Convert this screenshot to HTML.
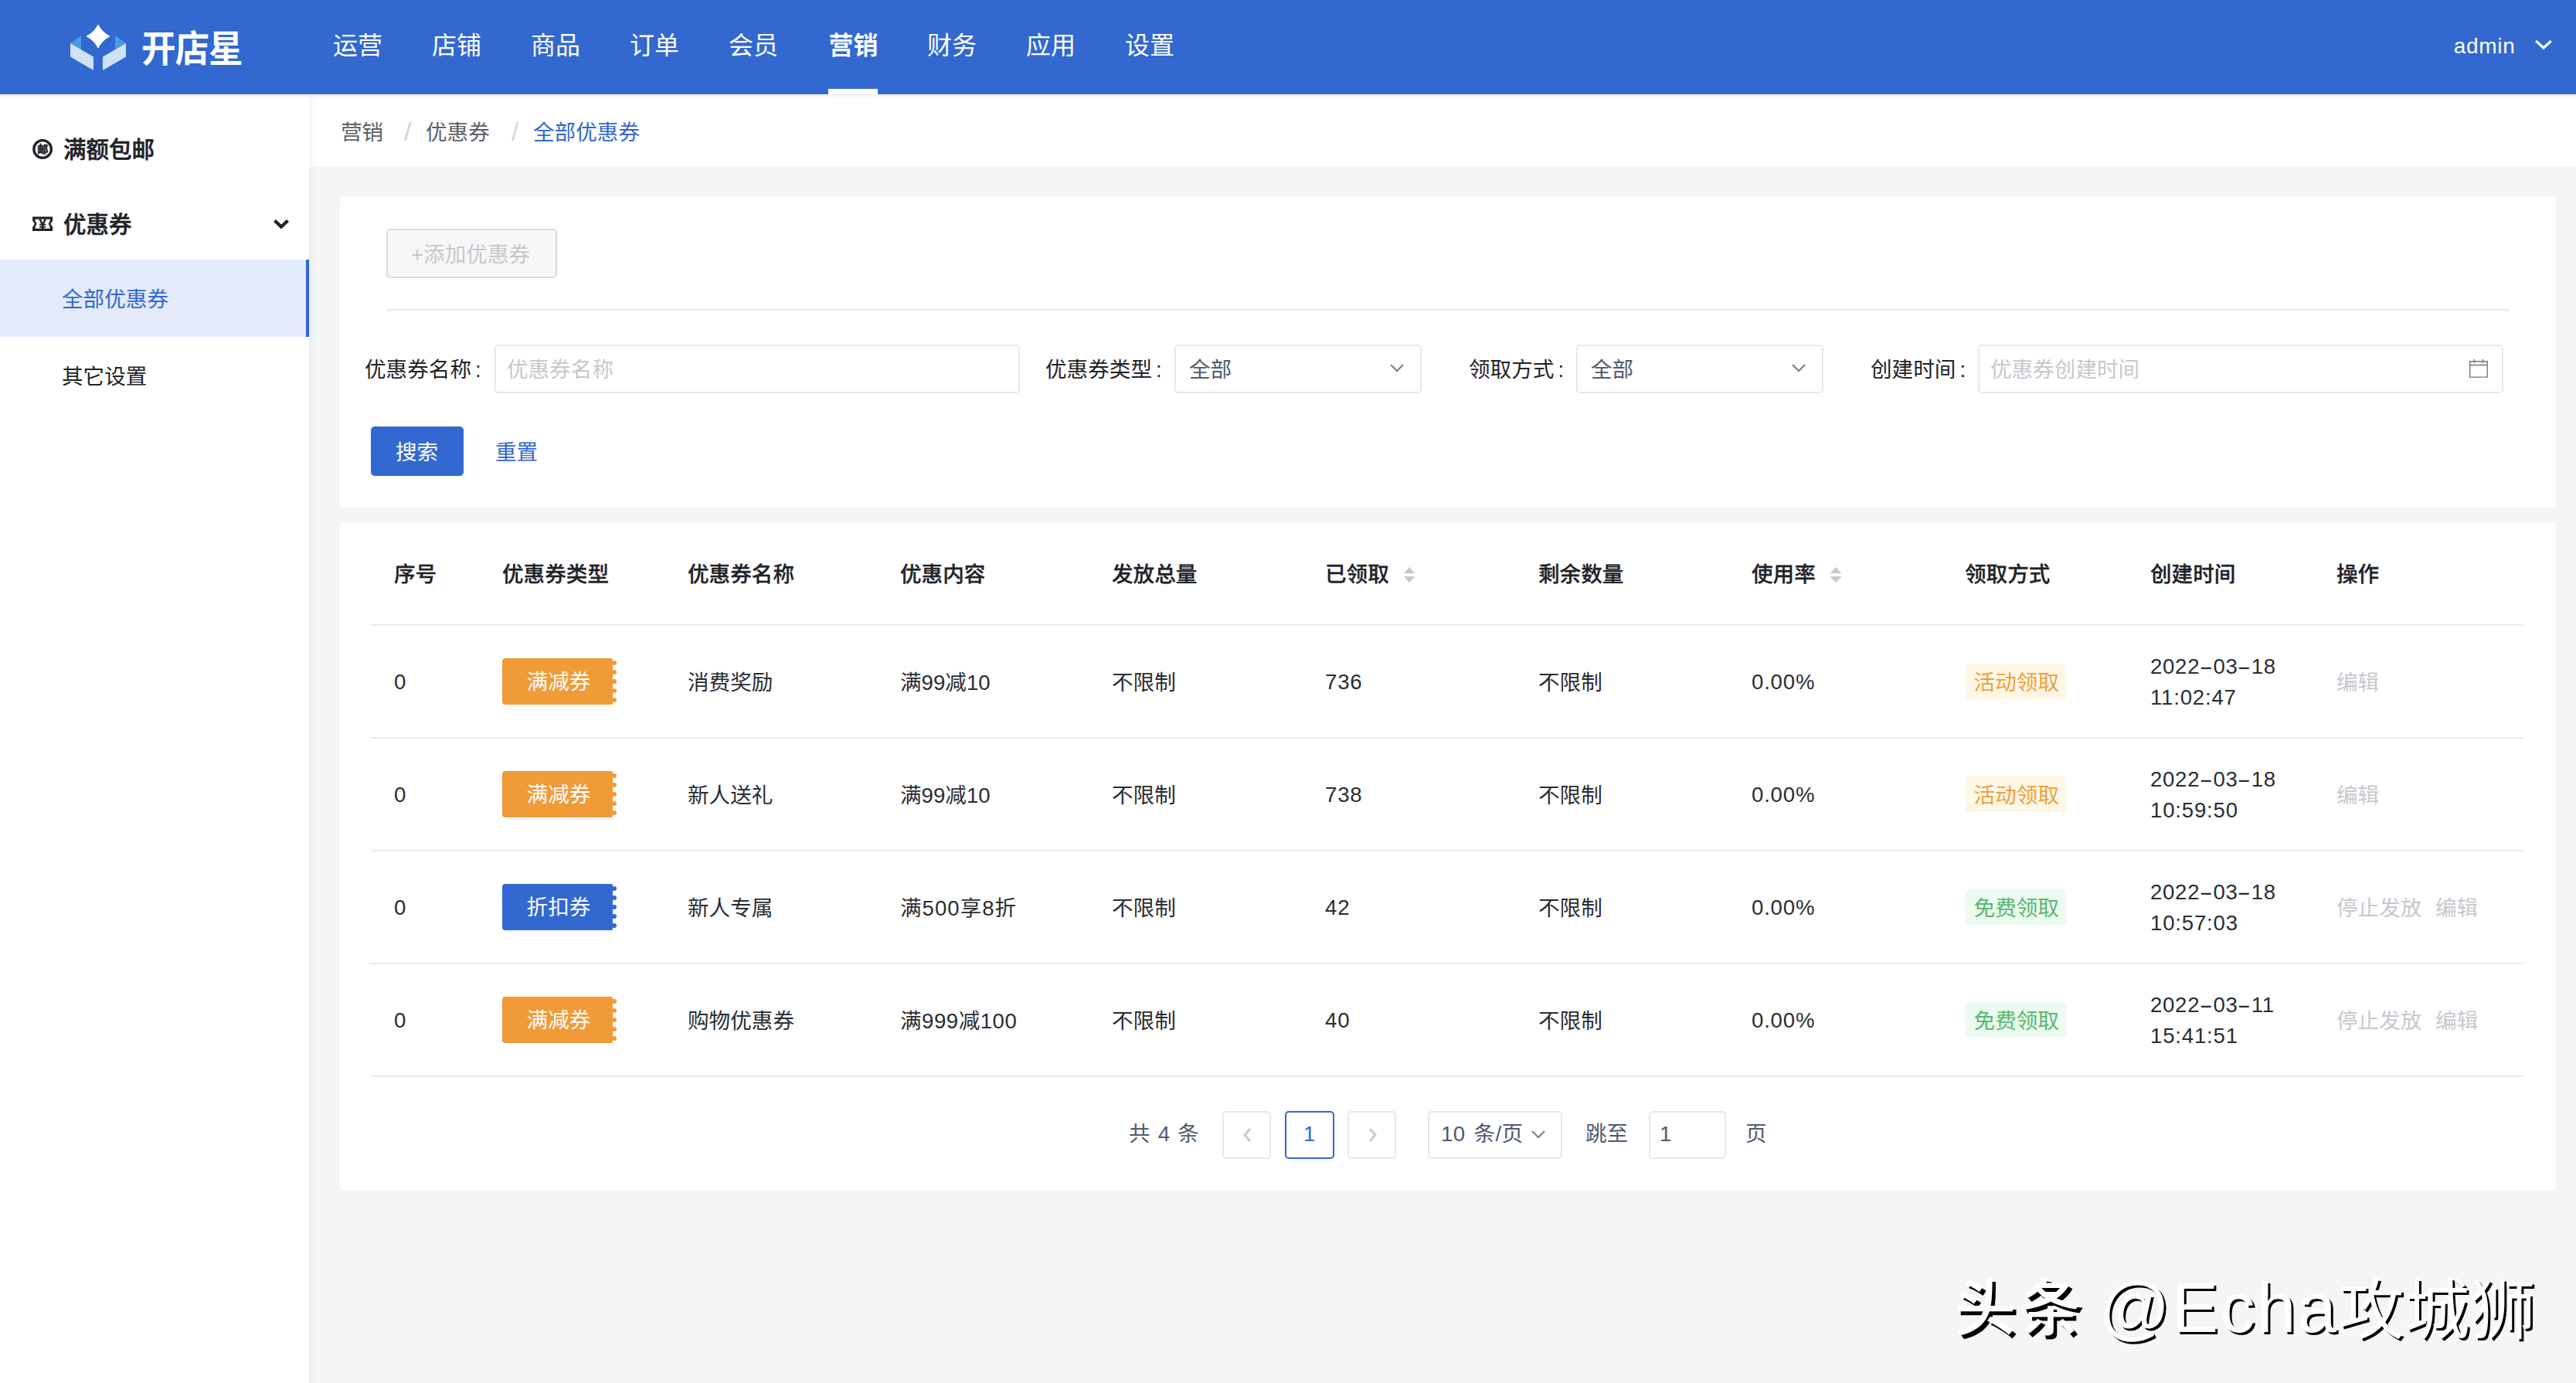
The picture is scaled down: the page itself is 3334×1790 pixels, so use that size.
<!DOCTYPE html>
<html lang="zh-CN">
<head>
<meta charset="utf-8">
<title>全部优惠券</title>
<style>
*{box-sizing:border-box;margin:0;padding:0}
html,body{width:3334px;height:1790px;background:#f4f5f7}
#root{position:relative;width:3334px;height:1790px;overflow:hidden;background:#f4f5f7;font-family:"Liberation Sans","Noto Sans CJK SC",sans-serif;color:#1f2329;font-size:27.6px}
.a{position:absolute}
.t{position:absolute;white-space:nowrap;line-height:44px;height:44px}
.n{margin-top:-1px;letter-spacing:.8px}
.d1{letter-spacing:.7px}
.hy{display:inline-block;transform:scaleX(1.9);margin:0 3.7px}
/* header */
#hd{left:0;top:0;width:3334px;height:122px;background:#3268d0;box-shadow:0 1px 5px rgba(20,50,120,.14)}
.nav{font-size:32px;color:#fff;top:37px}
.nav.on{font-weight:700}
#ul{left:1072px;top:115px;width:64px;height:7px;background:#fff}
/* sidebar */
#sb{left:0;top:122px;width:400px;height:1668px;background:#fff;box-shadow:3px 0 9px rgba(0,0,0,.05)}
.m1{font-size:29.5px;font-weight:500;-webkit-text-stroke:.55px #1f2329;color:#1f2329;margin-top:-1px}
.m2{font-size:27.6px;color:#1f2329}
#act{left:0;top:336px;width:400px;height:100px;background:#e3eaf9;border-right:4px solid #3268d0}
/* breadcrumb */
#bc{left:400px;top:122px;width:2934px;height:94px;background:#fff}
.bc{font-size:27.6px;color:#5c6066;top:150px}
.sl{color:#d2d4da;font-size:33px;margin-top:-1px}
/* panels */
.pn{background:#fff;border-radius:5px}
.lb{font-size:27.6px;color:#1f2329;top:457px}
.ip{position:absolute;top:445.5px;height:63px;border:2px solid #e7e8eb;border-radius:5px;background:#fff}
.co{margin-left:5px}
.ph{color:#c5c8ce;font-size:27.6px;top:457px}
.sv{color:#515a6e;font-size:27.6px;top:457px}
/* table */
.th{font-size:27.6px;font-weight:500;-webkit-text-stroke:.3px #1f2329;color:#1f2329;top:722px}
.ln{position:absolute;left:480px;width:2786px;height:2px;background:#e8eaec}
.td{font-size:27.6px;color:#2a2d33}
.tag{position:absolute;left:650px;width:143px;height:60px;border-radius:4px 2px 2px 4px;color:#fff;font-size:27.6px;line-height:62px;text-align:center;padding-left:3px}
.tag i{position:absolute;left:141px;top:0;width:8px;height:60px;display:block;background-size:8px 12px;background-repeat:repeat-y}
.og{background:#f19b38}
.og i{background-image:radial-gradient(circle at 4px 6px,#f19b38 2.6px,rgba(241,155,56,0) 3.4px)}
.bl{background:#3268d0}
.bl i{background-image:radial-gradient(circle at 4px 6px,#3268d0 2.6px,rgba(50,104,208,0) 3.4px)}
.st{position:absolute;left:2544px;width:129.5px;padding-left:2px;height:46px;line-height:49px;font-size:27.6px;text-align:center;border-radius:4px}
.st.o{background:#fff7e6;color:#ef9f3d}
.st.g{background:#ebfbf0;color:#58b770}
.op{font-size:27.6px;color:#c5c8ce}
.pg{position:absolute;top:1438px;height:62px;border:2px solid #e6e8eb;border-radius:5px;background:#fff}
.pt{font-size:27.6px;color:#515a6e;top:1446px}
</style>
</head>
<body>
<div id="root">
<div id="bc" class="a"></div>
<div id="sb" class="a"></div>
<!-- HEADER -->
<div id="hd" class="a"></div>
<svg class="a" style="left:88px;top:28px" width="80" height="68" viewBox="88 28 80 68">
  <polygon points="91,56 105,46 105,64" fill="#4a9be6"/>
  <polygon points="163,56 149,46 149,64" fill="#4a9be6"/>
  <polygon points="91,56 121,73.5 121,91 91,73.5" fill="#cfe3f8"/>
  <polygon points="163,56 133,73.5 133,91 163,73.5" fill="#cfe3f8"/>
  <path d="M127 32 Q132 42 142 47 Q132 52 127 62 Q122 52 112 47 Q122 42 127 32Z" fill="#fff" stroke="#fff" stroke-width="1" stroke-linejoin="round"/>
</svg>
<div class="t" style="left:183px;top:36px;font-size:44.5px;font-weight:700;color:#fff;line-height:56px;height:56px;letter-spacing:-1px;transform:scaleY(1.08);transform-origin:0 50%">开店星</div>
<div class="t nav" style="left:431px">运营</div>
<div class="t nav" style="left:559px">店铺</div>
<div class="t nav" style="left:687px">商品</div>
<div class="t nav" style="left:815px">订单</div>
<div class="t nav" style="left:943px">会员</div>
<div class="t nav on" style="left:1072.5px">营销</div>
<div class="t nav" style="left:1200px">财务</div>
<div class="t nav" style="left:1328px">应用</div>
<div class="t nav" style="left:1456px">设置</div>
<div id="ul" class="a"></div>
<div class="t" style="left:3175.7px;top:38px;font-size:28px;letter-spacing:.7px;color:#fff">admin</div>
<svg class="a" style="left:3280px;top:50px" width="24" height="16" viewBox="0 0 24 16"><path d="M2.2 3 L12 12 L21.8 3" fill="none" stroke="#fff" stroke-width="3.2"/></svg>

<!-- SIDEBAR -->
<div id="act" class="a"></div>
<svg class="a" style="left:40px;top:178px" width="30" height="30" viewBox="0 0 30 30"><circle cx="15.1" cy="15" r="11.3" fill="none" stroke="#1f2329" stroke-width="3.3"/><text x="15.3" y="19.8" font-size="14" font-weight="900" text-anchor="middle" fill="#1f2329" stroke="#1f2329" stroke-width=".35" font-family="Noto Sans CJK SC, sans-serif">邮</text></svg>
<div class="t m1" style="left:82px;top:173px">满额包邮</div>
<svg class="a" style="left:40px;top:278px" width="30" height="24" viewBox="0 0 30 24"><path fill-rule="evenodd" fill="#1f2329" d="M2.1 2.5 H28.2 V7.6 L25.4 11.75 L28.2 15.9 V21 H2.1 V15.9 L4.9 11.75 L2.1 7.6 Z M5.6 5.8 H24.7 V8 L22.6 11.75 L24.7 15.5 V17.7 H5.6 V15.5 L7.7 11.75 L5.6 8 Z"/><text x="15.15" y="17.6" font-size="16.5" font-weight="700" text-anchor="middle" fill="#1f2329" stroke="#1f2329" stroke-width=".5" font-family="Liberation Sans, sans-serif">¥</text></svg>
<div class="t m1" style="left:82px;top:270px">优惠券</div>
<svg class="a" style="left:350px;top:280px" width="28" height="20" viewBox="0 0 28 20"><path d="M5.5 5.5 L14 13.5 L22.5 5.5" fill="none" stroke="#1f2329" stroke-width="4.4" stroke-linecap="butt" stroke-linejoin="miter"/></svg>
<div class="t m2" style="left:80px;top:366px;color:#3268d0">全部优惠券</div>
<div class="t m2" style="left:80px;top:466px">其它设置</div>

<!-- BREADCRUMB -->
<div class="t bc" style="left:441px">营销</div>
<div class="t bc sl" style="left:523px">/</div>
<div class="t bc" style="left:551px">优惠券</div>
<div class="t bc sl" style="left:662px">/</div>
<div class="t bc" style="left:690px;color:#3268d0">全部优惠券</div>

<!-- PANEL 1 -->
<div class="a pn" style="left:440px;top:256px;width:2868px;height:400px"></div>
<div class="a" style="left:500px;top:296px;width:221px;height:63.5px;border:2px solid #dadbde;border-radius:5px;background:#f7f7f7"></div>
<div class="t" style="left:532px;top:308px;font-size:27.6px;color:#c5c8ce">+添加优惠券</div>
<div class="a" style="left:500px;top:400px;width:2748px;height:2px;background:#e8eaec"></div>

<div class="t lb" style="left:472px">优惠券名称<span class="co">:</span></div>
<div class="ip" style="left:640px;width:680px"></div>
<div class="t ph" style="left:656px">优惠券名称</div>
<div class="t lb" style="left:1353px">优惠券类型<span class="co">:</span></div>
<div class="ip" style="left:1520px;width:320px"></div>
<div class="t sv" style="left:1539px">全部</div>
<svg class="a" style="left:1796px;top:466px" width="24" height="20" viewBox="0 0 24 20"><path d="M4 6 L12 14 L20 6" fill="none" stroke="#808695" stroke-width="2.4"/></svg>
<div class="t lb" style="left:1901px">领取方式<span class="co">:</span></div>
<div class="ip" style="left:2040px;width:320px"></div>
<div class="t sv" style="left:2059px">全部</div>
<svg class="a" style="left:2316px;top:466px" width="24" height="20" viewBox="0 0 24 20"><path d="M4 6 L12 14 L20 6" fill="none" stroke="#808695" stroke-width="2.4"/></svg>
<div class="t lb" style="left:2421px">创建时间<span class="co">:</span></div>
<div class="ip" style="left:2560px;width:680px"></div>
<div class="t ph" style="left:2576px">优惠券创建时间</div>
<svg class="a" style="left:3194px;top:463px" width="28" height="28" viewBox="0 0 28 28"><path d="M2.7 4.7 H25.2 V25.1 H2.7 Z M2.7 9.5 H25.2 M8.4 2 V7 M19.4 2 V7" fill="none" stroke="#74777e" stroke-width="1.4"/></svg>

<div class="a" style="left:480px;top:552px;width:120px;height:64px;background:#3268d0;border-radius:5px"></div>
<div class="t" style="left:512px;top:564px;font-size:27.6px;color:#fff">搜索</div>
<div class="t" style="left:641px;top:564px;font-size:27.6px;color:#3268d0">重置</div>

<!-- PANEL 2 -->
<div class="a pn" style="left:440px;top:676px;width:2868px;height:865px"></div>
<div class="t th" style="left:510px">序号</div>
<div class="t th" style="left:650px">优惠券类型</div>
<div class="t th" style="left:890px">优惠券名称</div>
<div class="t th" style="left:1165px">优惠内容</div>
<div class="t th" style="left:1439px">发放总量</div>
<div class="t th" style="left:1715px">已领取</div>
<svg class="a" style="left:1814px;top:732px" width="20" height="24" viewBox="0 0 20 24"><path d="M2.5 10 L10 2 L17.5 10Z M2.5 14 L10 22 L17.5 14Z" fill="#c5c8ce"/></svg>
<div class="t th" style="left:1991px">剩余数量</div>
<div class="t th" style="left:2267px">使用率</div>
<svg class="a" style="left:2366px;top:732px" width="20" height="24" viewBox="0 0 20 24"><path d="M2.5 10 L10 2 L17.5 10Z M2.5 14 L10 22 L17.5 14Z" fill="#c5c8ce"/></svg>
<div class="t th" style="left:2543px">领取方式</div>
<div class="t th" style="left:2783px">创建时间</div>
<div class="t th" style="left:3024px">操作</div>
<div class="ln" style="top:808px"></div>
<div class="ln" style="top:954px"></div>
<div class="ln" style="top:1100px"></div>
<div class="ln" style="top:1246px"></div>
<div class="ln" style="top:1392px"></div>

<!-- ROWS -->
<!-- row 1 -->
<div class="t td n" style="left:510px;top:862px">0</div>
<div class="tag og" style="top:852px">满减券<i></i></div>
<div class="t td" style="left:890px;top:862px">消费奖励</div>
<div class="t td" style="left:1165px;top:862px">满99减10</div>
<div class="t td" style="left:1439px;top:862px">不限制</div>
<div class="t td n" style="left:1715px;top:862px">736</div>
<div class="t td" style="left:1991px;top:862px">不限制</div>
<div class="t td n" style="left:2267px;top:862px">0.00%</div>
<div class="st o" style="top:859px">活动领取</div>
<div class="t td n d1" style="left:2783px;top:842px">2022<span class="hy">-</span>03<span class="hy">-</span>18</div>
<div class="t td n" style="left:2783px;top:882px">11:02:47</div>
<div class="t op" style="left:3024px;top:862px">编辑</div>
<!-- row 2 -->
<div class="t td n" style="left:510px;top:1008px">0</div>
<div class="tag og" style="top:998px">满减券<i></i></div>
<div class="t td" style="left:890px;top:1008px">新人送礼</div>
<div class="t td" style="left:1165px;top:1008px">满99减10</div>
<div class="t td" style="left:1439px;top:1008px">不限制</div>
<div class="t td n" style="left:1715px;top:1008px">738</div>
<div class="t td" style="left:1991px;top:1008px">不限制</div>
<div class="t td n" style="left:2267px;top:1008px">0.00%</div>
<div class="st o" style="top:1005px">活动领取</div>
<div class="t td n d1" style="left:2783px;top:988px">2022<span class="hy">-</span>03<span class="hy">-</span>18</div>
<div class="t td n" style="left:2783px;top:1028px">10:59:50</div>
<div class="t op" style="left:3024px;top:1008px">编辑</div>
<!-- row 3 -->
<div class="t td n" style="left:510px;top:1154px">0</div>
<div class="tag bl" style="top:1144px">折扣券<i></i></div>
<div class="t td" style="left:890px;top:1154px">新人专属</div>
<div class="t td" style="left:1165px;top:1154px;letter-spacing:1px">满500享8折</div>
<div class="t td" style="left:1439px;top:1154px">不限制</div>
<div class="t td n" style="left:1715px;top:1154px">42</div>
<div class="t td" style="left:1991px;top:1154px">不限制</div>
<div class="t td n" style="left:2267px;top:1154px">0.00%</div>
<div class="st g" style="top:1151px">免费领取</div>
<div class="t td n d1" style="left:2783px;top:1134px">2022<span class="hy">-</span>03<span class="hy">-</span>18</div>
<div class="t td n" style="left:2783px;top:1174px">10:57:03</div>
<div class="t op" style="left:3024px;top:1154px">停止发放</div>
<div class="t op" style="left:3152px;top:1154px">编辑</div>
<!-- row 4 -->
<div class="t td n" style="left:510px;top:1300px">0</div>
<div class="tag og" style="top:1290px">满减券<i></i></div>
<div class="t td" style="left:890px;top:1300px">购物优惠券</div>
<div class="t td" style="left:1165px;top:1300px;letter-spacing:.5px">满999减100</div>
<div class="t td" style="left:1439px;top:1300px">不限制</div>
<div class="t td n" style="left:1715px;top:1300px">40</div>
<div class="t td" style="left:1991px;top:1300px">不限制</div>
<div class="t td n" style="left:2267px;top:1300px">0.00%</div>
<div class="st g" style="top:1297px">免费领取</div>
<div class="t td n d1" style="left:2783px;top:1280px">2022<span class="hy">-</span>03<span class="hy">-</span>11</div>
<div class="t td n" style="left:2783px;top:1320px">15:41:51</div>
<div class="t op" style="left:3024px;top:1300px">停止发放</div>
<div class="t op" style="left:3152px;top:1300px">编辑</div>

<!-- PAGINATION -->
<div class="t pt" style="left:1461px;word-spacing:2.5px">共 4 条</div>
<div class="pg" style="left:1582px;width:63px"></div>
<svg class="a" style="left:1604.5px;top:1457px" width="20" height="24" viewBox="0 0 20 24"><path d="M13 4 L6 12 L13 20" fill="none" stroke="#c5c8ce" stroke-width="2.8"/></svg>
<div class="pg" style="left:1663px;width:64px;border-color:#3268d0"></div>
<div class="t pt" style="left:1687px;color:#3268d0">1</div>
<div class="pg" style="left:1744px;width:63px"></div>
<svg class="a" style="left:1766px;top:1457px" width="20" height="24" viewBox="0 0 20 24"><path d="M7 4 L14 12 L7 20" fill="none" stroke="#c5c8ce" stroke-width="2.8"/></svg>
<div class="pg" style="left:1848px;width:174px"></div>
<div class="t pt" style="left:1865px;word-spacing:3px;letter-spacing:.4px">10 条/页</div>
<svg class="a" style="left:1979px;top:1458px" width="24" height="20" viewBox="0 0 24 20"><path d="M4 6 L12 14 L20 6" fill="none" stroke="#808695" stroke-width="2.4"/></svg>
<div class="t pt" style="left:2052px">跳至</div>
<div class="pg" style="left:2134px;width:100px"></div>
<div class="t pt" style="left:2148px">1</div>
<div class="t pt" style="left:2259px">页</div>

<!-- WATERMARK -->
<div class="t" id="wm" style="left:2525px;top:1638px;height:110px;line-height:110px;font-size:85px;color:#fff;text-shadow:3px 3px 0 #000"><b style="font-size:80px;font-weight:500;letter-spacing:5px;text-shadow:4.5px 4.5px 0 #000;position:relative;top:-3px;margin-left:4px">头条</b><span style="font-size:90px;letter-spacing:2.6px;margin-left:18px">@Echa</span><span style="position:relative;top:2px">攻城狮</span></div>
</div>
</body>
</html>
